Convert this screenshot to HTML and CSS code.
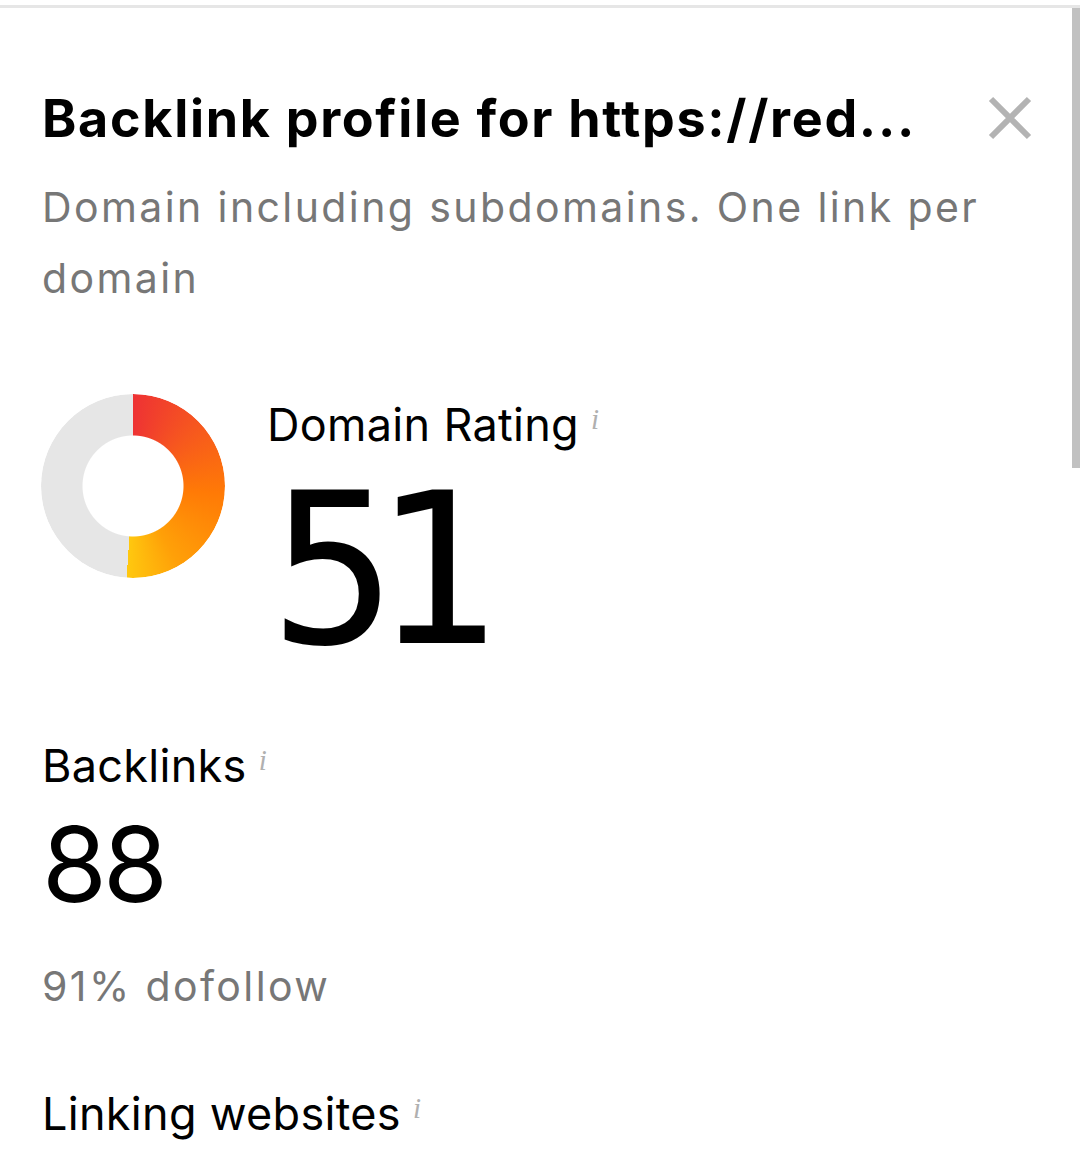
FILE: index.html
```html
<!DOCTYPE html>
<html lang="en">
<head>
  <meta charset="UTF-8">
  <title>Backlink profile</title>
  <link rel="stylesheet" href="styles.css">
</head>
<body>

<div class="panel">
  <div class="scrollbar"></div>

  <!-- header -->
  <div class="panel-head">
    <h1>Backlink profile for https://red...</h1>
    <span class="close">
      <svg width="44" height="44" viewBox="0 0 44 44">
        <path d="M3 3 L41 41 M41 3 L3 41" stroke="#b3b3b3" stroke-width="6" fill="none"/>
      </svg>
    </span>
  </div>
  <p class="sub">Domain including subdomains. One link per domain</p>

  <!-- DR -->
  <div class="rating">
    <div class="donut" style="--pct: 51"></div>
    <div class="rating-info">
      <div class="label">Domain Rating<i class="info">i</i></div>
      <div class="big">51</div>
    </div>
  </div>

  <div class="metric">
    <div class="label">Backlinks<i class="info">i</i></div>
    <div class="num">88</div>
    <div class="note">91% dofollow</div>
  </div>

  <div class="metric">
    <div class="label">Linking websites<i class="info">i</i></div>
  </div>
</div>

</body>
</html>
```

FILE: styles.css
```css
body { margin: 0; background: #fff; font-family: "Inter", "Roboto", sans-serif; color: #000; }

.panel {
  margin-top: 5px;
  border-top: 3px solid #e6e6e6;
  padding: 0 49px 0 42px;
  height: 1141px;
  overflow: hidden;
}
.scrollbar {
  position: fixed;
  top: 8px;
  right: 0;
  width: 8px;
  height: 460px;
  background: #c1c1c1;
}

.panel-head {
  display: flex;
  justify-content: space-between;
  align-items: center;
  margin-top: 82px;
}
.panel-head h1 {
  margin: 0;
  font-size: 52px;
  font-weight: 700;
  line-height: 58px;
  letter-spacing: 1.7px;
  white-space: nowrap;
}
.close { display: flex; margin-top: -2px; margin-right: -1px; }

.sub {
  margin: 24px 0 0;
  font-size: 41px;
  line-height: 71px;
  letter-spacing: 2.4px;
  color: #777;
}

.rating {
  display: flex;
  gap: 42px;
  margin-top: 80px;
  margin-left: -1px;
}
.donut {
  flex: none;
  width: 184px;
  height: 184px;
  border-radius: 50%;
  background: conic-gradient(#ee3234 0deg, #f6561f 45deg, #ff7a06 95deg, #ffa008 150deg, #ffc80f 184deg, #e6e6e6 184deg 360deg);
  -webkit-mask: radial-gradient(circle, transparent 50px, #000 51px);
  mask: radial-gradient(circle, transparent 50px, #000 51px);
}
.rating-info { padding-top: 5px; }

.label {
  font-size: 45px;
  line-height: 52px;
  letter-spacing: 0.3px;
}
.info {
  font-family: "Liberation Serif", serif;
  font-size: 29px;
  line-height: 0;
  color: #b0b0b0;
  vertical-align: 12px;
  margin-left: 12px;
}
.big {
  font-family: "DejaVu Sans Mono", monospace;
  font-size: 210px;
  line-height: 200px;
  letter-spacing: -24px;
  margin: 20px 0 0 3px;
}

.metric { margin-top: 69px; }
.num {
  font-size: 105px;
  line-height: 120px;
  letter-spacing: -4px;
  margin-top: 12px;
}
.note {
  font-size: 41px;
  line-height: 52px;
  letter-spacing: 2.4px;
  color: #777;
  margin-top: 36px;
}
.metric + .metric { margin-top: 76px; }
```
